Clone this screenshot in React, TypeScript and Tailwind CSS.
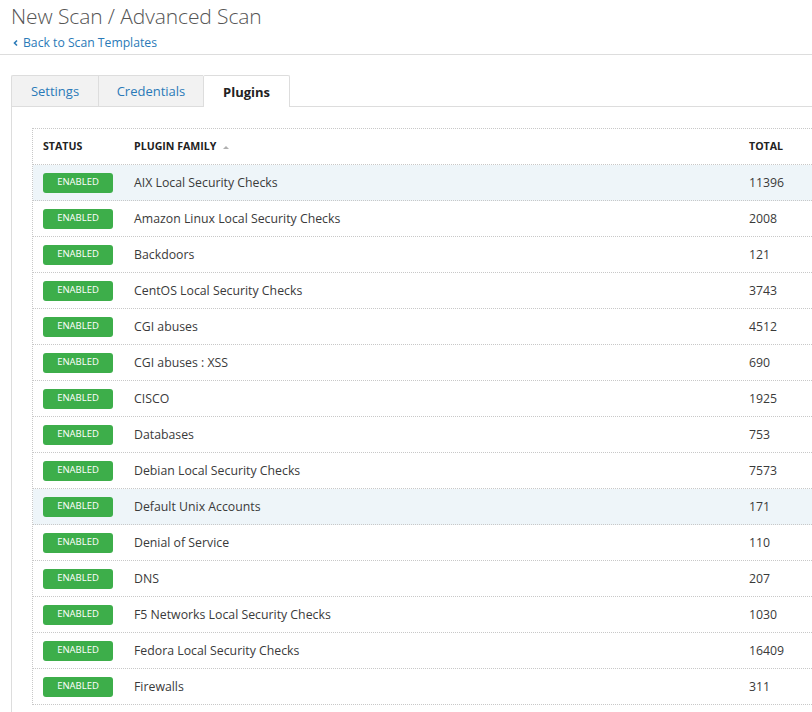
import React from "react";

const rows: [string, string, boolean][] = [
  ["AIX Local Security Checks", "11396", true],
  ["Amazon Linux Local Security Checks", "2008", false],
  ["Backdoors", "121", false],
  ["CentOS Local Security Checks", "3743", false],
  ["CGI abuses", "4512", false],
  ["CGI abuses : XSS", "690", false],
  ["CISCO", "1925", false],
  ["Databases", "753", false],
  ["Debian Local Security Checks", "7573", false],
  ["Default Unix Accounts", "171", true],
  ["Denial of Service", "110", false],
  ["DNS", "207", false],
  ["F5 Networks Local Security Checks", "1030", false],
  ["Fedora Local Security Checks", "16409", false],
  ["Firewalls", "311", false],
];

export default function App() {
  return (
    <div
      className="w-[812px] h-[712px] overflow-hidden bg-white text-[#333]"
      style={{ fontFamily: '"Open Sans", "Noto Sans", sans-serif' }}
    >
      <div className="border-b border-[#dddddd] pl-[11px] h-[56px]">
        <div className="text-[21px] font-light leading-[34px] text-[#555] -mt-[1px] tracking-[-0.1px]">
          New Scan / Advanced Scan
        </div>
        <div className="flex items-center text-[12.2px] leading-[16px] text-[#2a7ab8] mt-[2px]">
          <svg width="8" height="8" viewBox="0 0 8 8" className="ml-[1px] mr-[3px]">
            <path d="M5 1.5 L2.5 4 L5 6.5" stroke="#2a7ab8" strokeWidth="1.6" fill="none" />
          </svg>
          Back to Scan Templates
        </div>
      </div>

      <div className="mt-[20px] flex pl-[11px]">
        <div className="w-[87px] h-[32px] pt-[2px] border border-[#dddddd] border-r-0 bg-[#f2f2f2] rounded-tl-[2px] flex items-center justify-center text-[13px] text-[#2a7ab8]">
          Settings
        </div>
        <div className="w-[105px] h-[32px] pt-[2px] border border-[#dddddd] border-r-0 bg-[#f2f2f2] flex items-center justify-center text-[13px] text-[#2a7ab8]">
          Credentials
        </div>
        <div className="w-[87px] h-[32px] pt-[2px] border border-[#dddddd] border-b-0 bg-white rounded-t-[2px] flex items-center justify-center text-[13px] font-bold text-[#222]">
          Plugins
        </div>
        <div className="flex-1 border-b border-[#dddddd]" />
      </div>

      <div className="ml-[11px] border-l border-[#dddddd] pl-[20px] pt-[21px] h-[620px]">
        <div className="border-l border-t border-dotted border-[#c8c8c8]">
          <div className="grid grid-cols-[90px_1fr_74px] h-[36px] items-center border-b border-dotted border-[#c8c8c8] text-[10.6px] font-bold text-[#222]">
            <div className="pl-[10px]">STATUS</div>
            <div className="pl-[11px] flex items-center">
              PLUGIN FAMILY
              <svg width="6" height="4" viewBox="0 0 6 4" className="ml-[7px] mt-[2px]">
                <path d="M0 4 L3 1 L6 4 Z" fill="#b0b0b0" />
              </svg>
            </div>
            <div className="pl-[11px]">TOTAL</div>
          </div>
          {rows.map(([name, total, hl]) => (
            <div
              key={name}
              className={`grid grid-cols-[90px_1fr_74px] h-[36px] items-center border-b border-dotted border-[#c8c8c8] text-[12.3px] text-[#3a3a3a] ${
                hl ? "bg-[#eef5f9]" : "bg-white"
              }`}
            >
              <div className="pl-[10px]">
                <div className="w-[70px] h-[20px] rounded-[3px] bg-[#3dae4a] text-white text-[9.5px] flex items-center justify-center">
                  ENABLED
                </div>
              </div>
              <div className="pl-[11px] pt-[2px]">{name}</div>
              <div className="pl-[11px] pt-[2px]">{total}</div>
            </div>
          ))}
        </div>
      </div>
    </div>
  );
}
